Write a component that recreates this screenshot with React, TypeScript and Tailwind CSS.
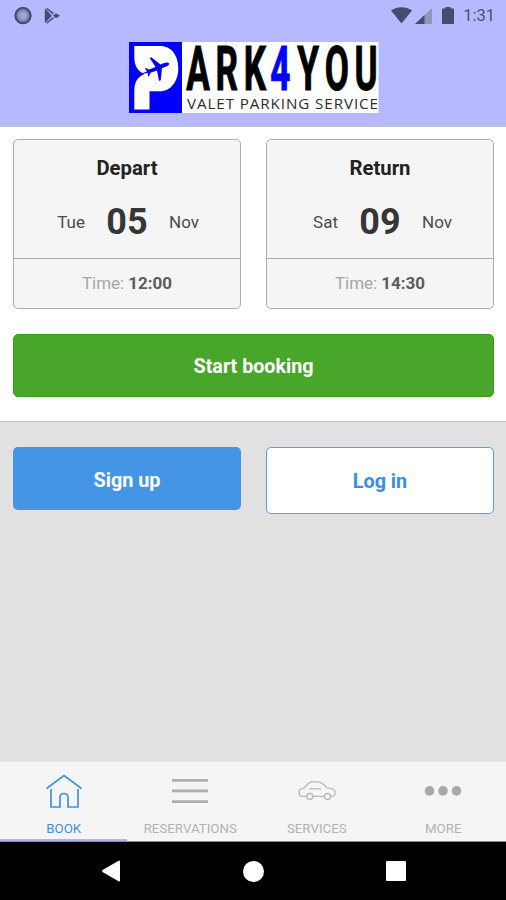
import type { ReactNode } from "react";

const StatusBar = () => (
  <div className="flex h-8 items-center justify-between pl-[14px] pr-[11px]">
    <div className="flex items-center gap-[11px]">
      <svg width="18" height="18" viewBox="0 0 18 18">
        <circle cx="9" cy="8.6" r="7.6" fill="#8285ae" stroke="#484b70" strokeWidth="2.2" />
        <circle cx="9" cy="8.6" r="4.2" fill="#a0a2cd" />
      </svg>
      <svg width="18" height="18" viewBox="0 0 18 18">
        <path d="M1.8 1.5v14.5L9 8.7Z" fill="#484b70" />
        <path d="M3.5 1.5 10.5 6.7M3.5 16 10.5 10.7" stroke="#5c5f88" strokeWidth="2" />
        <path d="m10 8.7 3-2.5 4 2.5-4 2.5Z" fill="#484b70" />
      </svg>
    </div>
    <div className="flex items-center">
      <svg width="21" height="18" viewBox="0 0 22 18">
        <path d="M0 3.3C6-1.400 16-1.400 22 3.3L11 16.8Z" fill="#484b70" />
      </svg>
      <svg className="ml-[3px]" width="17" height="17" viewBox="0 0 17 17">
        <path d="M17 0v16H0Z" fill="#9294bd" />
        <path d="M9.500 7v9H0Z" fill="#484b70" />
      </svg>
      <svg className="ml-[10px]" width="12" height="18" viewBox="0 0 12 18">
        <path d="M3.5 0h5v1.500H11q1 0 1 1v13.500q0 1-1 1H1q-1 0-1-1V2.500q0-1 1-1h2.5Z" fill="#484b70" />
      </svg>
      <span className="ml-[7px] w-[34px] text-right text-[16.5px] leading-5 text-[#4c4f75]">1:31</span>
    </div>
  </div>
);

const Logo = () => (
  <svg width="250" height="71" viewBox="0 0 250 71" className="block overflow-visible">
    <rect width="249.5" height="71" fill="#fff" />
    <rect width="53" height="71" fill="#0000fe" />
    <path
      d="M5.3 4H31C43 4 49.3 14 49.3 26.5S42 49.3 31 49.3H20.5V67.5H5.3V49C5.3 39.5 9 34.5 16 31.8C9 30.5 5.3 23 5.3 16Z"
      fill="#fff"
    />
    {/* plane */}
    <path
      d="M40 21.2C39 19.9 36.5 20.4 34.5 21.3L31.5 22.5L22.2 15.2L20.8 15.9L26.5 24.9L20 27.5L16.8 26L16 26.6L18 29.5L11 32L18.7 30.9L19.2 34.4L20.2 34.3L21.5 30.8L28 28.4L30.1 39L31.7 38.3L33 26.2L36.5 24.8C38.5 24 40.8 22.5 40 21.2Z"
      fill="#0000fe"
    />
    <text
      transform="translate(57.3 48) scale(.58 1)"
      className="font-[Roboto,sans-serif]"
      fontWeight="700"
      fontSize="60.5"
      letterSpacing="9.9"
      stroke="#000"
      strokeWidth="1"
      style={{ fontKerning: "none" }}
    >
      ARK
      <tspan dx="-3" fill="#0000fe" stroke="#0000fe">4</tspan>
      <tspan dx="2">YOU</tspan>
    </text>
    <text
      x="58"
      y="67"
      textLength="191"
      lengthAdjust="spacing"
      className="font-['Open_Sans',sans-serif]"
      fontSize="15.2"
      fill="#2c2c2c"
    >
      VALET PARKING SERVICE
    </text>
  </svg>
);

type DateCardProps = { title: string; day: string; date: string; month: string; time: string };

const DateCard = ({ title, day, date, month, time }: DateCardProps) => (
  <div className="flex h-[170px] w-[228px] flex-col rounded-[5px] border border-[#adadad] bg-[#f5f5f5]">
    <div className="flex h-[119px] flex-col border-b border-[#a9a9a9] pt-[16px]">
      <h2 className="text-center text-[20.3px] font-bold leading-6 text-[#222]">{title}</h2>
      <div className="mt-[22px] grid grid-cols-[71px_1fr_71px] items-center text-[17px] leading-10 text-[#4b4b4b]">
        <span className="text-right">{day}</span>
        <span className="text-center text-[36px] font-bold text-[#363636]">{date}</span>
        <span>{month}</span>
      </div>
    </div>
    <p className="flex flex-1 items-center justify-center gap-1 text-[17px] text-[#a5a5a5]">
      Time: <b className="font-bold text-[#5c5c5c]">{time}</b>
    </p>
  </div>
);

const tabs: { label: string; icon: ReactNode }[] = [
  {
    label: "BOOK",
    icon: (
      <svg width="38" height="36" viewBox="0 0 38 36" fill="none" stroke="#3f91e5" strokeWidth="1.7">
        <path d="M1.5 15.5 19 2.5 36.5 15.5M6 16V34H15V24.5Q15 20.5 19 20.5T23 24.5V34H33V16" />
      </svg>
    ),
  },
  {
    label: "RESERVATIONS",
    icon: (
      <svg width="38" height="36" viewBox="0 0 38 36" stroke="#adadad" strokeWidth="2.8">
        <path d="M1 7.4H37M1 17.9H37M1 28.6H37" />
      </svg>
    ),
  },
  {
    label: "SERVICES",
    icon: (
      <svg width="38" height="36" viewBox="0 0 38 36" fill="none" stroke="#b9b9b9" strokeWidth="1.3">
        <path d="M8.5 23.3H3.2Q1 22.8 1.5 20.3L1.2 17.8Q1.5 15.8 6 15.1Q9 10.8 12.5 9.100Q17 8.100 22 9.3Q26 10.8 29 14.8Q36 15.3 37 18.3V21.3Q36.5 23.3 33 23.3M15 23.3H26" />
        <circle cx="11.8" cy="23.5" r="3" />
        <circle cx="29.5" cy="23.5" r="3" />
        <path d="M11.5 15.8H23" />
      </svg>
    ),
  },
  {
    label: "MORE",
    icon: (
      <svg width="38" height="36" viewBox="0 0 38 36" fill="#a9a9a9">
        <circle cx="5.5" cy="17.9" r="4.8" />
        <circle cx="19" cy="17.9" r="4.8" />
        <circle cx="32.5" cy="17.9" r="4.8" />
      </svg>
    ),
  },
];

const TabBar = () => (
  <nav className="grid h-[80px] grid-cols-4 border-b border-[#8b8b8b] bg-[#f5f5f5]">
    {tabs.map(({ label, icon }, i) => (
      <div
        key={label}
        className={
          "flex flex-col items-center border-b-2 pl-[1px] pt-[11px] text-[13.3px] " +
          (i === 0 ? "border-[#b0b2f8] text-[#3f91e5]" : "border-transparent text-[#b2b2b2]")
        }
      >
        {icon}
        <span className="mt-[12px] leading-4">{label}</span>
      </div>
    ))}
  </nav>
);

const App = () => (
  <div className="flex h-[900px] w-[506px] flex-col overflow-hidden bg-[#e1e1e1] font-[Roboto,sans-serif]">
    <header className="h-[127px] border-b border-[#c4c4cf] bg-[#b6b9ff]">
      <StatusBar />
      <div className="flex justify-center pl-[2px] pt-[10px]">
        <Logo />
      </div>
    </header>

    <section className="h-[295px] border-b border-[#c4c4c4] bg-white pl-[13px] pr-[12px] pt-[12px]">
      <div className="flex justify-between">
        <DateCard title="Depart" day="Tue" date="05" month="Nov" time="12:00" />
        <DateCard title="Return" day="Sat" date="09" month="Nov" time="14:30" />
      </div>
      <button className="mt-[25px] block h-[63px] w-full rounded-[5px] border border-[#339e13] bg-[#48a62b] pt-[2px] text-[19.7px] font-bold text-white">
        Start booking
      </button>
    </section>

    <main className="flex flex-1 items-start justify-between pl-[13px] pr-[12px] pt-[25px]">
      <button className="h-[63px] w-[228px] rounded-[5px] bg-[#4595e6] pt-[4px] text-[19.8px] font-bold text-white">
        Sign up
      </button>
      <button className="h-[67px] w-[228px] rounded-[5px] border border-[#5a9fe2] bg-white pt-[2px] text-[19.8px] font-bold text-[#3c8fe0]">
        Log in
      </button>
    </main>

    <TabBar />

    {/* android navigation keys */}
    <div className="flex h-[58px] items-center bg-black pl-[101px]">
      <svg width="20" height="22" viewBox="0 0 20 22" fill="#fff">
        <path d="M18 .5q1-.3 1 1v19q0 1.3-1 1L1.5 12q-1-1 0-2Z" />
      </svg>
      <div className="ml-[122px] size-[21px] rounded-full bg-white" />
      <div className="ml-[122px] size-[20px] rounded-[1px] bg-white" />
    </div>
  </div>
);

export default App;
